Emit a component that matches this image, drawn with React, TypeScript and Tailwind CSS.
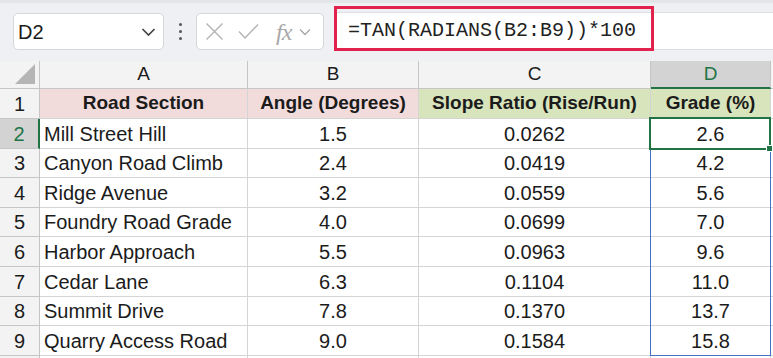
import React from "react";

const rows = [
  ["Mill Street Hill", "1.5", "0.0262", "2.6"],
  ["Canyon Road Climb", "2.4", "0.0419", "4.2"],
  ["Ridge Avenue", "3.2", "0.0559", "5.6"],
  ["Foundry Road Grade", "4.0", "0.0699", "7.0"],
  ["Harbor Approach", "5.5", "0.0963", "9.6"],
  ["Cedar Lane", "6.3", "0.1104", "11.0"],
  ["Summit Drive", "7.8", "0.1370", "13.7"],
  ["Quarry Access Road", "9.0", "0.1584", "15.8"],
];
const heights = ["h-[30px]", "h-[29px]", "h-[30px]", "h-[29px]", "h-[30px]", "h-[30px]", "h-[29px]", "h-[30px]"];

const font = { fontFamily: '"Liberation Sans", Arial, sans-serif' };

export default function App() {
  return (
    <div className="w-[773px] h-[358px] overflow-hidden bg-white text-[#1b1b1b]" style={font}>
      {/* Toolbar */}
      <div className="h-[61px] bg-[#eef0f3] border-t-[3px] border-[#e3e5e8] flex items-start">
        <div className="ml-[13px] mt-[10px] w-[151px] h-[37px] bg-white border border-[#d5d7da] rounded-[5px] flex items-center pl-[4px] pr-[7px]">
          <span className="text-[20px] flex-1">D2</span>
          <svg width="15" height="10" viewBox="0 0 15 10" fill="none" stroke="#444" strokeWidth="1.7">
            <path d="M1.5 2 L7.5 8 L13.5 2" />
          </svg>
        </div>
        <div className="w-[32px] mt-[20px] flex flex-col items-center gap-[4px]">
          <div className="w-[3px] h-[3px] bg-[#555] rounded-full" />
          <div className="w-[3px] h-[3px] bg-[#555] rounded-full" />
          <div className="w-[3px] h-[3px] bg-[#555] rounded-full" />
        </div>
        <div className="mt-[10px] w-[128px] h-[37px] bg-white border border-[#d5d7da] rounded-[5px] flex items-center pl-[8px]">
          <svg width="19" height="19" viewBox="0 0 19 19" fill="none" stroke="#b3b3b3" strokeWidth="1.4">
            <path d="M1.5 1.5 L17.5 17.5 M17.5 1.5 L1.5 17.5" />
          </svg>
          <svg className="ml-[14px]" width="21" height="17" viewBox="0 0 21 17" fill="none" stroke="#b3b3b3" strokeWidth="1.4">
            <path d="M1 8.5 L7 15 L20 1.5" />
          </svg>
          <span
            className="ml-[17px] text-[24px] italic text-[#a8a8a8] leading-none tracking-[-1px]"
            style={{ fontFamily: '"Liberation Serif", serif' }}
          >
            fx
          </span>
          <svg className="ml-[8px]" width="12" height="8" viewBox="0 0 12 8" fill="none" stroke="#a8a8a8" strokeWidth="1.4">
            <path d="M1 1.5 L6 6.5 L11 1.5" />
          </svg>
        </div>
        <div className="ml-[10px] mt-[9px] flex-1 h-[38px] bg-white border-y border-l border-[#dcdee1] relative flex items-center">
          <div className="absolute left-[-1px] top-[-7px] w-[320px] h-[45px] border-[3px] border-[#e2214c]" />
          <span className="ml-[13px] text-[20px] text-[#222]" style={{ fontFamily: '"Liberation Mono", monospace' }}>
            =TAN(RADIANS(B2:B9))*100
          </span>
        </div>
      </div>

      {/* Grid */}
      <div className="relative">
        {/* Column headers */}
        <div className="flex h-[28px] bg-[#f3f3f3] text-[19px]">
          <div className="w-[40px] border-r border-b border-[#c6c6c6] relative">
            <div
              className="absolute right-[4px] bottom-[4px] w-[20px] h-[20px] bg-[#b5b5b5]"
              style={{ clipPath: "polygon(100% 0, 100% 100%, 0 100%)" }}
            />
          </div>
          <div className="w-[208px] border-r border-b border-[#c6c6c6] flex items-center justify-center">A</div>
          <div className="w-[171px] border-r border-b border-[#c6c6c6] flex items-center justify-center">B</div>
          <div className="w-[232px] border-r border-b border-[#c6c6c6] flex items-center justify-center">C</div>
          <div className="w-[120px] border-r border-[#c6c6c6] border-b-2 border-b-[#217346] bg-[#d3d3d3] text-[#217346] flex items-center justify-center">
            D
          </div>
          <div className="flex-1 border-b border-[#c6c6c6]" />
        </div>

        {/* Row 1 */}
        <div className="flex h-[30px] text-[19px] font-bold">
          <div className="w-[40px] bg-[#f3f3f3] border-r border-b border-[#c6c6c6] flex items-center justify-center font-normal text-[20px]">1</div>
          <div className="w-[208px] bg-[#f2dcdb] border-r border-b border-[#d4d4d4] flex items-center justify-center">Road Section</div>
          <div className="w-[171px] bg-[#f2dcdb] border-r border-b border-[#d4d4d4] flex items-center justify-center">Angle (Degrees)</div>
          <div className="w-[232px] bg-[#d8e4bc] border-r border-b border-[#d4d4d4] flex items-center justify-center">Slope Ratio (Rise/Run)</div>
          <div className="w-[120px] bg-[#d8e4bc] border-r border-b border-[#d4d4d4] flex items-center justify-center">Grade (%)</div>
          <div className="flex-1 border-b border-[#d4d4d4]" />
        </div>

        {rows.map((r, i) => (
          <div key={i} className={`flex text-[20px] ${heights[i]}`}>
            <div
              className={
                i === 0
                  ? "w-[40px] bg-[#d3d3d3] text-[#217346] border-r-2 border-r-[#217346] border-b border-[#c6c6c6] flex items-center justify-center"
                  : "w-[40px] bg-[#f3f3f3] border-r border-b border-[#c6c6c6] flex items-center justify-center"
              }
            >
              {i + 2}
            </div>
            <div className="w-[208px] border-r border-b border-[#d4d4d4] flex items-center pl-[4px]">{r[0]}</div>
            <div className="w-[171px] border-r border-b border-[#d4d4d4] flex items-center justify-center">{r[1]}</div>
            <div className="w-[232px] border-r border-b border-[#d4d4d4] flex items-center justify-center">{r[2]}</div>
            <div className="w-[120px] border-r border-b border-[#d4d4d4] flex items-center justify-center">{r[3]}</div>
            <div className="flex-1 border-b border-[#d4d4d4]" />
          </div>
        ))}
        <div className="flex h-[10px]">
          <div className="w-[40px] bg-[#f3f3f3] border-r border-[#c6c6c6]" />
          <div className="w-[208px] border-r border-[#d4d4d4]" />
          <div className="w-[171px] border-r border-[#d4d4d4]" />
          <div className="w-[232px] border-r border-[#d4d4d4]" />
          <div className="w-[120px] border-r border-[#d4d4d4]" />
        </div>

        {/* Selection overlays */}
        <div className="absolute left-[650px] top-[57px] w-[121px] h-[238px] border border-[#4472c4] pointer-events-none" />
        <div className="absolute left-[649px] top-[56px] w-[122px] h-[33px] border-2 border-[#217346] pointer-events-none" />
        <div className="absolute left-[766px] top-[84px] w-[7px] h-[7px] bg-[#217346] border border-white pointer-events-none" />
      </div>
    </div>
  );
}
